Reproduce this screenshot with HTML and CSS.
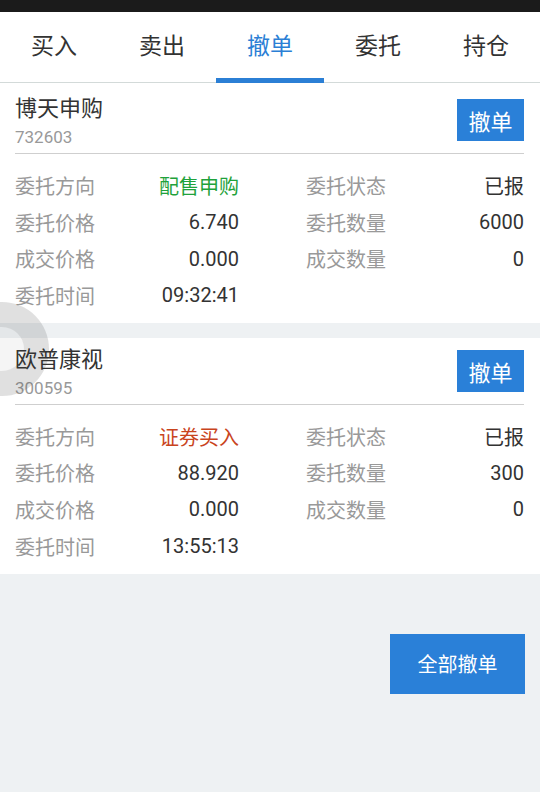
FILE: index.html
```html
<!DOCTYPE html>
<html lang="zh-CN">
<head>
<meta charset="utf-8">
<title>撤单</title>
<link rel="stylesheet" href="styles.css">
</head>
<body>
<div class="statusbar"></div>
<nav class="tabs">
  <div class="tab">买入</div>
  <div class="tab">卖出</div>
  <div class="tab active">撤单</div>
  <div class="tab">委托</div>
  <div class="tab">持仓</div>
</nav>
<main class="list">
  <section class="card">
    <div class="head">
      <div class="name">
        <div class="title">博天申购</div>
        <div class="code">732603</div>
      </div>
      <button class="cancel">撤单</button>
    </div>
    <div class="grid">
      <div class="cell"><span class="lbl">委托方向</span><span class="val green">配售申购</span></div>
      <div class="cell"><span class="lbl">委托状态</span><span class="val">已报</span></div>
      <div class="cell"><span class="lbl">委托价格</span><span class="val">6.740</span></div>
      <div class="cell"><span class="lbl">委托数量</span><span class="val">6000</span></div>
      <div class="cell"><span class="lbl">成交价格</span><span class="val">0.000</span></div>
      <div class="cell"><span class="lbl">成交数量</span><span class="val">0</span></div>
      <div class="cell"><span class="lbl">委托时间</span><span class="val">09:32:41</span></div>
      <div class="cell"></div>
    </div>
  </section>
  <section class="card">
    <div class="head">
      <div class="name">
        <div class="title">欧普康视</div>
        <div class="code">300595</div>
      </div>
      <button class="cancel">撤单</button>
    </div>
    <div class="grid">
      <div class="cell"><span class="lbl">委托方向</span><span class="val red">证券买入</span></div>
      <div class="cell"><span class="lbl">委托状态</span><span class="val">已报</span></div>
      <div class="cell"><span class="lbl">委托价格</span><span class="val">88.920</span></div>
      <div class="cell"><span class="lbl">委托数量</span><span class="val">300</span></div>
      <div class="cell"><span class="lbl">成交价格</span><span class="val">0.000</span></div>
      <div class="cell"><span class="lbl">成交数量</span><span class="val">0</span></div>
      <div class="cell"><span class="lbl">委托时间</span><span class="val">13:55:13</span></div>
      <div class="cell"></div>
    </div>
  </section>
  <div class="actions">
    <button class="cancel-all">全部撤单</button>
  </div>
</main>
<div class="ghost"></div>
</body>
</html>
```
FILE: styles.css
```css
* { box-sizing: border-box; }
html, body {
  margin: 0;
  padding: 0;
}
body {
  width: 540px;
  height: 792px;
  overflow: hidden;
  background: #eef1f3;
  font-family: "Roboto", "Noto Sans CJK SC", sans-serif;
  color: #333;
  position: relative;
}
.statusbar {
  height: 12px;
  background: #1b1b1b;
}
.tabs {
  display: flex;
  height: 71px;
  background: #fff;
  border-bottom: 1px solid #d3dad9;
}
.tab {
  flex: 1;
  text-align: center;
  font-size: 23px;
  line-height: 66px;
  padding-top: 2px;
  color: #333;
  position: relative;
}
.tab.active {
  color: #2b7fd5;
}
.tab.active::after {
  content: "";
  position: absolute;
  left: 0;
  right: 0;
  bottom: -1px;
  height: 5px;
  background: #2b7fd5;
}
.list {
  display: flex;
  flex-direction: column;
  gap: 15px;
}
.card {
  background: #fff;
  padding: 7px 16px 9px 15px;
}
.card:first-child {
  padding-top: 11px;
}
.head {
  display: flex;
  justify-content: space-between;
  align-items: flex-start;
  border-bottom: 1px solid #cfcfcf;
  padding-bottom: 3px;
}
.title {
  font-size: 22px;
  line-height: 30px;
  color: #333;
}
.code {
  font-size: 17px;
  line-height: 26px;
  color: #999;
}
.cancel {
  margin-top: 5px;
  width: 67px;
  height: 42px;
  border: 0;
  padding: 0;
  background: #2a80d8;
  color: #fff;
  font-family: inherit;
  font-size: 22px;
}
.grid {
  display: grid;
  grid-template-columns: 224px 1fr;
  column-gap: 67px;
  padding-top: 13px;
}
.cell {
  display: flex;
  justify-content: space-between;
  align-items: center;
  height: 36.7px;
  font-size: 20px;
}
.lbl { color: #999; }
.val { color: #333; }
.val.green { color: #1fa23b; }
.val.red { color: #c9441d; }
.actions {
  display: flex;
  justify-content: flex-end;
  padding: 45px 15px 0 0;
}
.cancel-all {
  width: 135px;
  height: 60px;
  border: 0;
  padding: 0;
  background: #2a80d8;
  color: #fff;
  font-family: inherit;
  font-size: 20px;
}
.ghost {
  position: absolute;
  left: -45px;
  top: 302px;
  width: 94px;
  height: 94px;
  border-radius: 50%;
  border: 25px solid rgba(60, 60, 60, 0.16);
  background: rgba(60, 60, 60, 0.05);
  background-clip: padding-box;
}
```
